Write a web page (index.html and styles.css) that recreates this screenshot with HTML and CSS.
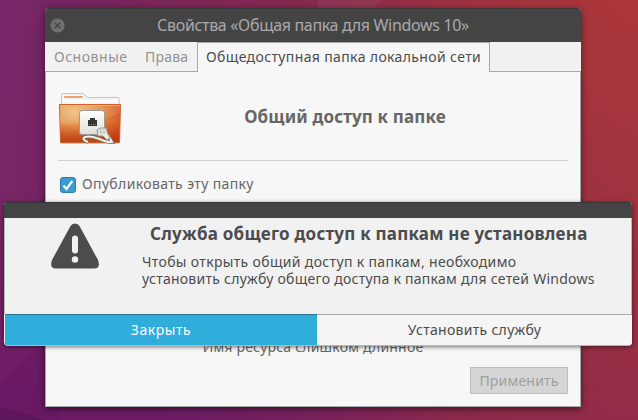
FILE: index.html
```html
<!DOCTYPE html>
<html lang="ru">
<head>
<meta charset="utf-8">
<title>Общий доступ к папке</title>
<link rel="stylesheet" href="styles.css">
</head>
<body>
<div class="desktop">
  <svg class="wallpaper" width="638" height="420" viewBox="0 0 638 420" aria-hidden="true">
    <path d="M0 0H382L318 66V0z" fill="#fff" opacity=".05"/>
    <path d="M0 382L60 322V420H0z" fill="#601060" opacity=".25"/>
    <path d="M0 407L45 420H0z" fill="#401040" opacity=".25"/>
  </svg>
  <section class="window">
    <header class="titlebar">
      <svg class="close" width="15" height="15" viewBox="0 0 15 15"><circle cx="7.5" cy="7.5" r="7.1" fill="#6f6f6f"/><path d="M4.700 4.700l5.600 5.600M10.300 4.700l-5.600 5.600" stroke="#444" stroke-width="1.300"/></svg>
      <h1 class="window-title">Свойства «Общая папка для Windows 10»</h1>
    </header>
    <nav class="tabs">
      <span class="tab tab-general">Основные</span>
      <span class="tab tab-rights">Права</span>
      <span class="tab tab-active">Общедоступная папка локальной сети</span>
      <span class="tab-fill"></span>
    </nav>
    <main class="page">
      <div class="intro">
        <svg class="folder" width="64" height="56" viewBox="0 0 64 56">
          <defs>
            <radialGradient id="glow" cx=".25" cy=".2" r=".95"><stop offset="0" stop-color="#efbf7d"/><stop offset=".5" stop-color="#e18842"/><stop offset="1" stop-color="#d14013"/></radialGradient>
            <linearGradient id="shade" x2="0" y2="1"><stop offset=".5" stop-color="#b63b10" stop-opacity="0"/><stop offset="1" stop-color="#b63b10" stop-opacity=".75"/></linearGradient>
            <linearGradient id="plate" x2="0" y2="1"><stop stop-color="#fff"/><stop offset="1" stop-color="#dededa"/></linearGradient>
          </defs>
          <path d="M3 51h57v2H3z" fill="#000" opacity=".18"/>
          <path d="M3.500 15V4.500Q3.500 2.500 5.500 2.500H25L30 6.500H60Q61 6.500 61 7.500V15z" fill="#f5f5f5" stroke="#c4c4c4"/>
          <path d="M5 10H60" stroke="#fff" stroke-width="2"/>
          <rect x="6" y="5" width="19" height="2" rx="1" fill="#eea273"/>
          <path d="M1.500 13.500H62.500L61.500 51.500H2.500z" fill="url(#glow)"/>
          <path d="M1.500 13.500H62.500L61.500 51.500H2.500z" fill="url(#shade)" stroke="#c9622d"/>
          <path d="M2 33Q40 32 62 22V14H2z" fill="#fff" opacity=".1"/>
          <path d="M2 14.500H62" stroke="#f0b27e" opacity=".7"/>
          <rect x="21.500" y="19.500" width="25" height="24" rx="2.500" fill="url(#plate)" stroke="#a29b91"/>
          <path d="M30 35V29h2v-2h5v2h2v6z" fill="#343431"/>
          <path d="M31 33.500h7" stroke="#988224" stroke-dasharray="1 1"/>
          <path d="M51 47L54 51C44 52 38 43 27 46C24 47 26 50 30 51" fill="none" stroke="#77665c" stroke-width="3.400"/>
          <path d="M50 44L54 51C44 52 38 43 27 46C24 47 26 50 30 51" fill="none" stroke="#eee" stroke-width="2"/>
          <path d="M39 39L43 37H48L50 43L52 47L49 49L45 45H40z" fill="#e9e9e6" stroke="#97938e"/>
          <path d="M43 38v6M40 41h8M46 38v5" stroke="#b5b5b0" stroke-width=".7"/>
        </svg>
        <h2 class="heading">Общий доступ к папке</h2>
      </div>
      <label class="publish">
        <svg width="16" height="16" viewBox="0 0 16 16"><rect x=".5" y=".5" width="15" height="15" rx="2.500" fill="#3a9bce" stroke="#2d7ca5"/><path d="M3.500 8.500l3 3.500L12.300 4" fill="none" stroke="#fff" stroke-width="2.200"/></svg>
        <span class="publish-text">Опубликовать эту папку</span>
      </label>
      <div class="footer">
        <p class="hint">Имя ресурса слишком длинное</p>
        <button class="apply" disabled>Применить</button>
      </div>
    </main>
  </section>
  <section class="dialog" role="alertdialog">
    <div class="dialog-bar"></div>
    <div class="dialog-body">
      <svg class="warning" width="48" height="46" viewBox="0 0 48 46"><path d="M24 0.500Q27 0.500 28.500 3L47 37Q50 45.500 43 45.500H5Q-2 45.500 1 37L19.500 3Q21 .5 24 .5z" fill="#4c4c4c"/><rect x="21" y="12.500" width="6" height="18" rx="3" fill="#f1f1f1"/><circle cx="24" cy="36.500" r="3.200" fill="#f1f1f1"/></svg>
      <div class="message">
        <h2 class="dialog-title">Служба общего доступ к папкам не установлена</h2>
        <p class="line line-one">Чтобы открыть общий доступ к папкам, необходимо</p>
        <p class="line line-two">установить службу общего доступа к папкам для сетей Windows</p>
      </div>
    </div>
    <div class="actions">
      <button class="action action-close">Закрыть</button>
      <button class="action action-install">Установить службу</button>
    </div>
  </section>
</div>
</body>
</html>
```
FILE: styles.css
```css
* { box-sizing: border-box; }
body { margin: 0; font: 14px/18px "Noto Sans", "Open Sans", sans-serif; color: #4c4c4c; }
h1, h2, p { margin: 0; }
button { font: inherit; margin: 0; padding: 0; }
.desktop {
  position: relative; width: 638px; height: 420px; overflow: hidden;
  background:
    radial-gradient(ellipse 300px 200px at 100% 0, #ab363a, transparent),
    linear-gradient(95deg, #782669 0, #74245f 12%, #852950 42%, #9a3042 78%, #a1333e 100%);
}
.desktop::before {
  content: ""; position: absolute; inset: 0;
  background: linear-gradient(0deg, #6d1c66 0, #6d1c6600 50%);
  -webkit-mask-image: linear-gradient(90deg, #000 0, #000 25%, #0004 70%, #0004 100%);
  mask-image: linear-gradient(90deg, #000 0, #000 25%, #0004 70%, #0004 100%);
}
.wallpaper { position: absolute; inset: 0; }
.window, .dialog { white-space: nowrap; display: flex; flex-direction: column; }
.window {
  position: absolute; left: 45px; top: 8px; width: 536px; height: 399px;
  border-radius: 4px 4px 0 0; background: #f7f7f7; box-shadow: 0 2px 7px #0008;
}
.titlebar {
  height: 34px; display: flex; align-items: center; padding: 0 5px;
  background: #444; border-top: 1px solid #383838; border-radius: 4px 4px 0 0; color: #a9a9a9;
}
.window-title { flex: 1; padding: 0 15px 1px 0; text-align: center; font-size: 16px; font-weight: 400; line-height: 22px; letter-spacing: -.33px; }
.tabs { display: flex; height: 30px; background: #f1f1f1; }
.tab { padding: 6px 9px 0; border-bottom: 1px solid #a8a8a8; color: #929292; }
.tab-general { width: 91px; letter-spacing: .53px; }
.tab-rights { width: 61px; letter-spacing: .2px; }
.tab-active { width: 293px; padding-left: 8px; border: solid #a8a8a8; border-width: 1px 1px 0; padding-top: 5px; background: #f7f7f7; color: #4c4c4c; letter-spacing: .37px; }
.tab-fill { flex: 1; border-bottom: 1px solid #a8a8a8; }
.page { flex: 1; display: flex; flex-direction: column; padding: 0 12px 12px; border: solid #a8a8a8; border-width: 0 1px 1px; color: #666; }
.intro { height: 89px; display: flex; align-items: center; border-bottom: 1px solid #d0d0d0; }
.folder { flex: none; margin-top: 5px; }
.heading { flex: 1; padding-top: 1px; font-size: 17px; line-height: 24px; text-align: center; letter-spacing: .15px; }
.publish { display: flex; align-items: center; gap: 6px; padding: 15px 0 0 2px; letter-spacing: .37px; }
.publish-text { margin-top: -1px; }
.footer { margin-top: auto; display: flex; flex-direction: column; gap: 11px; letter-spacing: .2px; }
.hint { text-align: center; }
.apply { align-self: flex-end; width: 98px; height: 27px; border: 1px solid #bebebe; background: #d5d5d5; color: #a0a0a0; letter-spacing: .2px; }
.dialog {
  position: absolute; left: 4px; top: 202px; width: 628px; height: 144px; overflow: hidden;
  border-radius: 4px; background: #f1f1f1; box-shadow: 0 1px 4px #0008; border-bottom: 1px solid #b5b5b1;
}
.dialog-bar { height: 16px; flex: none; background: #444; border-top: 1px solid #363636; }
.dialog-body { flex: 1; display: flex; border: solid #b9b9b5; border-width: 0 1px; padding: 5px 0 0 46px; }
.warning { flex: none; }
.message { margin-left: 43px; }
.dialog-title { padding-left: 8px; font-size: 17px; line-height: 22px; letter-spacing: .23px; }
.line { line-height: 17px; }
.line-one { margin-top: 8px; letter-spacing: .34px; }
.line-two { letter-spacing: .26px; }
.actions { display: flex; height: 31px; padding-left: 1px; }
.action { border: 0; color: #4c4c4c; background: #f5f5f5; border-top: 1px solid #a8a8a8; letter-spacing: .3px; }
.action-close { width: 312px; background: #2faddb; border-top-color: #287391; color: #fff; letter-spacing: .55px; }
.action-install { flex: 1; }
```
